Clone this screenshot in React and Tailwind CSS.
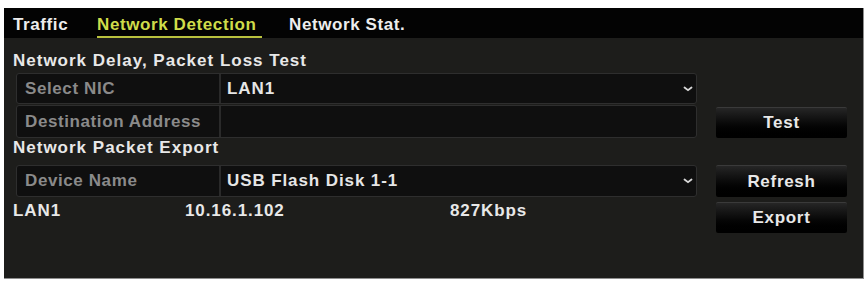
import React from "react";

function Chevron() {
  return (
    <svg width="10" height="6" viewBox="0 0 10 6" className="shrink-0">
      <path d="M1.5 1.5 L5 4.2 L8.5 1.5" stroke="#d8d8d8" strokeWidth="1.8" fill="none" strokeLinecap="round" />
    </svg>
  );
}

function Btn({ children, className = "" }) {
  return (
    <div
      className={
        "w-[131px] flex items-center justify-center rounded-[2px] border-t border-[#3a3a3a] bg-gradient-to-b from-[#262626] via-[#0a0a0a] to-[#000000] text-[#e8e8e8] text-[17px] tracking-[0.7px] font-bold " +
        className
      }
    >
      {children}
    </div>
  );
}

function Field({ label, value, dropdown, className = "" }) {
  return (
    <div className={"flex w-[681px] rounded-[3px] border border-[#2e2e2e] bg-[#0f0f0f] " + className}>
      <div className="w-[204px] flex items-center pl-[8px] border-r-2 border-[#2a2a2a] text-[#8a8a8a] text-[17px] tracking-[0.6px] font-bold">
        {label}
      </div>
      <div className="flex-1 flex items-center pl-[6px] pr-[3px] text-[#e6e6e6] text-[17px] tracking-[0.9px] font-bold">
        <span className="flex-1">{value}</span>
        {dropdown && <Chevron />}
      </div>
    </div>
  );
}

export default function App() {
  return (
    <div
      className="w-[868px] h-[281px] bg-white pt-[8px] pl-[4px] pr-[4px] pb-[2px]"
      style={{ fontFamily: '"Liberation Sans", Arial, sans-serif' }}
    >
      <div className="w-full h-full bg-[#1d1d1b] border-r border-b border-[#8e8e8e] flex flex-col">
        <div className="h-[30px] bg-[#030303] flex items-stretch pl-[9px] text-[17px] leading-[20px] tracking-[0.6px] font-bold">
          <div className="w-[84px] pt-[7px] text-[#ededed]">Traffic</div>
          <div className="w-[165px] pt-[7px] text-[#cfdc4a] border-b-2 border-[#b9c23e]">Network Detection</div>
          <div className="pl-[27px] pt-[7px] text-[#ededed]">Network Stat.</div>
        </div>
        <div className="h-[35px] pt-[13px] pl-[9px] text-[#e8e8e8] text-[17px] leading-[20px] tracking-[1px] font-bold">
          Network Delay, Packet Loss Test
        </div>
        <div className="flex pl-[12px]">
          <Field label="Select NIC" value="LAN1" dropdown className="h-[31px]" />
        </div>
        <div className="flex pl-[12px] pt-[1px] items-end gap-[19px]">
          <Field label="Destination Address" value="" className="h-[33px]" />
          <Btn className="h-[31px]">Test</Btn>
        </div>
        <div className="h-[27px] pl-[9px] text-[#e8e8e8] text-[17px] leading-[20px] tracking-[1px] font-bold">
          Network Packet Export
        </div>
        <div className="flex pl-[12px] gap-[19px]">
          <Field label="Device Name" value="USB Flash Disk 1-1" dropdown className="h-[32px]" />
          <Btn className="h-[32px]">Refresh</Btn>
        </div>
        <div className="flex pl-[9px] pt-[4px] gap-[19px]">
          <div className="w-[684px] flex items-start text-[#e8e8e8] text-[17px] leading-[20px] tracking-[0.9px] font-bold">
            <span className="w-[172px]">LAN1</span>
            <span className="w-[265px]">10.16.1.102</span>
            <span>827Kbps</span>
          </div>
          <Btn className="h-[31px] mt-[1px]">Export</Btn>
        </div>
      </div>
    </div>
  );
}
